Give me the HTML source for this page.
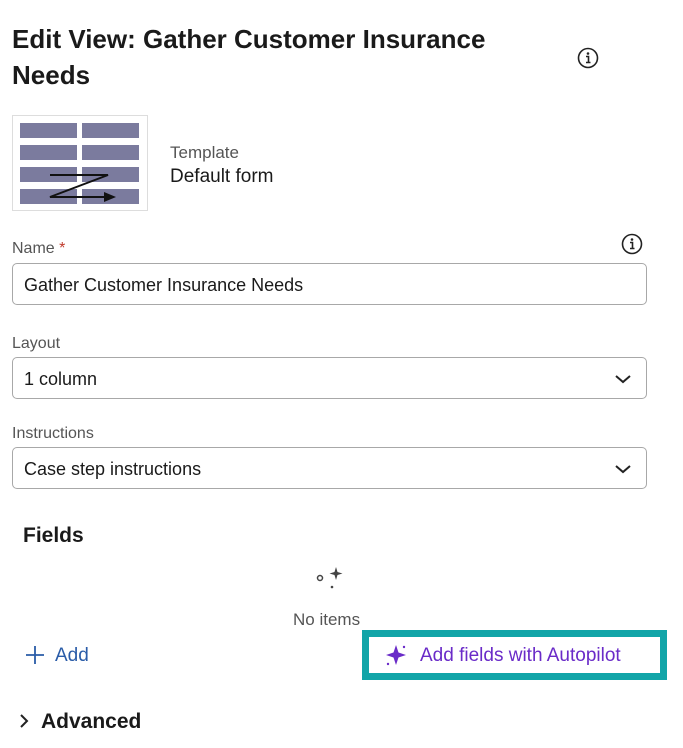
<!DOCTYPE html><html><head><style>
body{margin:0;width:683px;height:748px;background:#fff;font-family:"Liberation Sans",sans-serif;color:#1a1a1a;position:relative;overflow:hidden}
.a{position:absolute}
.inp{position:absolute;left:12px;font-size:18px;line-height:42px;padding-left:11px;box-sizing:border-box;width:635px;height:42px;border:1px solid #a8a8a8;border-radius:5px}
.lbl{position:absolute;left:12px;font-size:16px;color:#555}
.chev{position:absolute;right:14px;top:15px}
</style></head><body>
<div class="a" style="left:12px;top:21px;font-size:26px;font-weight:600;line-height:36px;width:540px">Edit View: Gather Customer Insurance Needs</div>
<svg class="a" style="left:577px;top:47px" width="22" height="22" viewBox="0 0 22 22"><circle cx="11" cy="11" r="9.5" fill="none" stroke="#222" stroke-width="1.6"/><circle cx="11" cy="6.5" r="1.3" fill="#222"/><path d="M9 9.5h2.5v6M9 15.5h4.5" stroke="#222" stroke-width="1.6" fill="none"/></svg>
<svg class="a" style="left:12px;top:115px" width="136" height="96" viewBox="0 0 136 96"><rect x="0.5" y="0.5" width="135" height="95" fill="#fff" stroke="#ddd"/>
<g fill="#7b7b9e"><rect x="8" y="8" width="57" height="15"/><rect x="70" y="8" width="57" height="15"/><rect x="8" y="30" width="57" height="15"/><rect x="70" y="30" width="57" height="15"/><rect x="8" y="52" width="57" height="15"/><rect x="70" y="52" width="57" height="15"/><rect x="8" y="74" width="57" height="15"/><rect x="70" y="74" width="57" height="15"/></g>
<path d="M38 60h58L38 82h56" stroke="#111" stroke-width="2" fill="none"/><path d="M92 77l12 5-12 5z" fill="#111"/></svg>
<div class="a" style="left:170px;top:143px;font-size:17px;color:#555">Template</div>
<div class="a" style="left:170px;top:166px;font-size:19px">Default form</div>
<div class="lbl" style="top:240px">Name <span style="color:#c0392b">*</span></div>
<svg class="a" style="left:621px;top:233px" width="22" height="22" viewBox="0 0 22 22"><circle cx="11" cy="11" r="9.5" fill="none" stroke="#222" stroke-width="1.6"/><circle cx="11" cy="6.5" r="1.3" fill="#222"/><path d="M9 9.5h2.5v6M9 15.5h4.5" stroke="#222" stroke-width="1.6" fill="none"/></svg>
<div class="inp" style="top:263px">Gather Customer Insurance Needs</div>
<div class="lbl" style="top:335px">Layout</div>
<div class="inp" style="top:357px">1 column<svg class="chev" width="18" height="12"><path d="M2 3l7 6 7-6" stroke="#222" stroke-width="2" fill="none"/></svg></div>
<div class="lbl" style="top:425px">Instructions</div>
<div class="inp" style="top:447px">Case step instructions<svg class="chev" width="18" height="12"><path d="M2 3l7 6 7-6" stroke="#222" stroke-width="2" fill="none"/></svg></div>
<div class="a" style="left:23px;top:524px;font-size:21px;font-weight:600">Fields</div>
<svg class="a" style="left:312px;top:566px" width="34" height="26"><circle cx="8" cy="12" r="2.5" fill="none" stroke="#444" stroke-width="1.5"/><circle cx="20" cy="21" r="1.3" fill="#444"/><path d="M24 1l1.5 5 5 1.5-5 1.5-1.5 5-1.5-5-5-1.5 5-1.5z" fill="#444"/></svg>
<div class="a" style="left:293px;top:610px;font-size:17px;color:#555">No items</div>
<svg class="a" style="left:24px;top:644px" width="22" height="22"><path d="M11 2v18M2 11h18" stroke="#2a5ca8" stroke-width="1.8"/></svg>
<div class="a" style="left:55px;top:645px;font-size:19px;color:#2a5ca8">Add</div>
<div class="a" style="left:362px;top:630px;width:305px;height:50px;border:7px solid #12a5a8;box-sizing:border-box"></div>
<svg class="a" style="left:384px;top:643px" width="24" height="24" viewBox="0 0 24 24"><path d="M12 2l2.5 7.5L22 12l-7.5 2.5L12 22l-2.5-7.5L2 12l7.5-2.5z" fill="#6a2bc8"/><circle cx="20" cy="4" r="1.2" fill="#6a2bc8"/><circle cx="4" cy="21" r="1.2" fill="#6a2bc8"/></svg>
<div class="a" style="left:420px;top:645px;font-size:19px;color:#6a2bc8">Add fields with Autopilot</div>
<svg class="a" style="left:18px;top:712px" width="12" height="18"><path d="M3 3l6 6-6 6" stroke="#222" stroke-width="2" fill="none"/></svg>
<div class="a" style="left:41px;top:710px;font-size:21px;font-weight:600">Advanced</div>
</body></html>
